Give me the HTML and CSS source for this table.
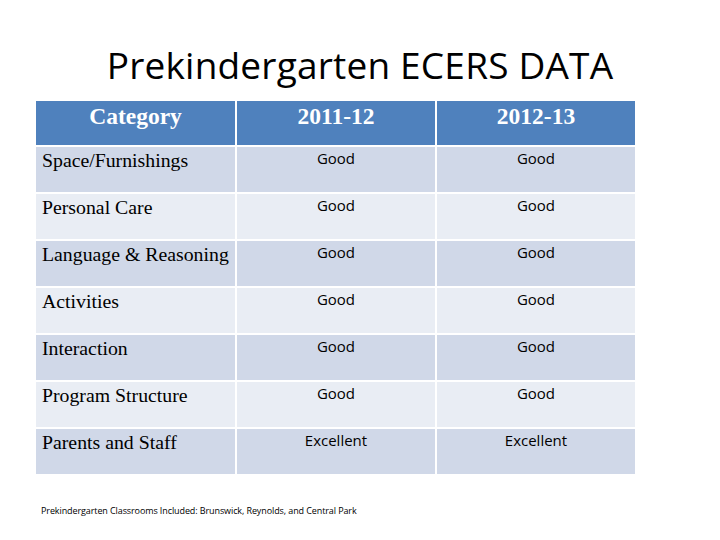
FILE: index.html
```html
<!DOCTYPE html>
<html>
<head>
<meta charset="utf-8">
<link rel="stylesheet" href="styles.css">
</head>
<body>
<div class="slide">
  <h1 class="title">Prekindergarten ECERS DATA</h1>
  <div class="table">
    <div class="cell head">Category</div>
    <div class="cell head">2011-12</div>
    <div class="cell head">2012-13</div>

    <div class="cell cat odd">Space/Furnishings</div>
    <div class="cell val odd">Good</div>
    <div class="cell val odd">Good</div>

    <div class="cell cat even">Personal Care</div>
    <div class="cell val even">Good</div>
    <div class="cell val even">Good</div>

    <div class="cell cat odd">Language &amp; Reasoning</div>
    <div class="cell val odd">Good</div>
    <div class="cell val odd">Good</div>

    <div class="cell cat even">Activities</div>
    <div class="cell val even">Good</div>
    <div class="cell val even">Good</div>

    <div class="cell cat odd">Interaction</div>
    <div class="cell val odd">Good</div>
    <div class="cell val odd">Good</div>

    <div class="cell cat even">Program Structure</div>
    <div class="cell val even">Good</div>
    <div class="cell val even">Good</div>

    <div class="cell cat odd">Parents and Staff</div>
    <div class="cell val odd">Excellent</div>
    <div class="cell val odd">Excellent</div>
  </div>
  <p class="note">Prekindergarten Classrooms Included: Brunswick, Reynolds, and Central Park</p>
</div>
</body>
</html>
```
FILE: styles.css
```css
html, body {
  margin: 0;
  padding: 0;
  background: #ffffff;
}
.slide {
  width: 720px;
  height: 540px;
  overflow: hidden;
  display: flex;
  flex-direction: column;
}
.title {
  margin: 0;
  padding-top: 43px;
  height: 58px;
  font-family: "Open Sans", sans-serif;
  font-weight: 400;
  font-size: 37px;
  line-height: 44px;
  color: #000000;
  text-align: center;
  letter-spacing: 0.2px;
}
.table {
  margin-left: 36px;
  width: 599px;
  display: grid;
  grid-template-columns: 199px 198px 198px;
  grid-template-rows: 44px repeat(7, 45px);
  gap: 2px;
}
.cell {
  box-sizing: border-box;
}
.head {
  background: #4f81bd;
  color: #ffffff;
  font-family: "Liberation Serif", serif;
  font-weight: 700;
  font-size: 23.5px;
  line-height: 26px;
  text-align: center;
  padding-top: 2px;
}
.odd { background: #d0d8e8; }
.even { background: #e9edf4; }
.cat {
  font-family: "Liberation Serif", serif;
  font-size: 19.8px;
  line-height: 22px;
  color: #000000;
  padding: 2px 0 0 6px;
}
.val {
  font-family: "Open Sans", sans-serif;
  font-size: 15px;
  line-height: 20px;
  color: #000000;
  text-align: center;
  padding-top: 1px;
}
.note {
  margin: 0;
  padding: 30px 0 0 41px;
  font-family: "Open Sans", sans-serif;
  font-size: 9px;
  line-height: 14px;
  letter-spacing: -0.1px;
  color: #000000;
}
```
